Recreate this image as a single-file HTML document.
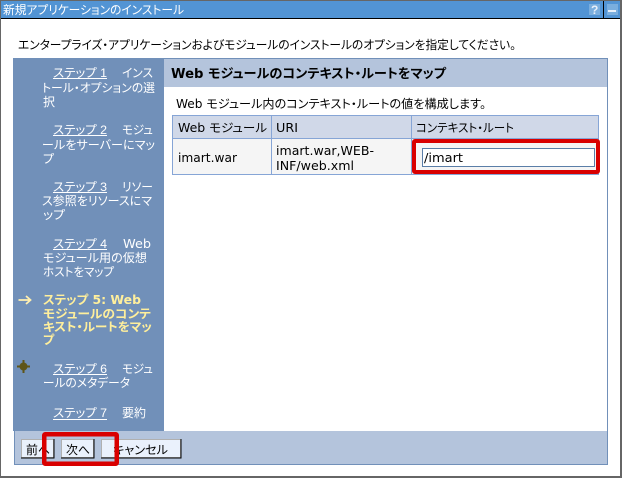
<!DOCTYPE html>
<html>
<head>
<meta charset="utf-8">
<style>
html,body{margin:0;padding:0;width:622px;height:479px;overflow:hidden;background:#fff}
svg{display:block}
text{font-family:"Liberation Sans","Noto Sans CJK JP",sans-serif;font-size:12px;font-feature-settings:"palt";white-space:pre}
.v{font-family:"DejaVu Sans","Noto Sans CJK JP",sans-serif}
.w{fill:#fff}
.y{fill:#ffef9c;font-weight:bold}
.k{fill:#000}
</style>
</head>
<body>
<svg width="622" height="479" viewBox="0 0 622 479" xmlns="http://www.w3.org/2000/svg">
<rect width="622" height="479" fill="#fff"/>
<!-- window frame -->
<rect x="0" y="0" width="622" height="1" fill="#666"/>
<rect x="0" y="0" width="1" height="478" fill="#666"/>
<rect x="620" y="0" width="2" height="478" fill="#666"/>
<rect x="0" y="476" width="622" height="2" fill="#666"/>
<rect x="1" y="1" width="619" height="17" fill="#5294d4"/>
<rect x="1" y="18" width="619" height="1" fill="#000"/>
<text x="3" y="14" class="w" textLength="181" lengthAdjust="spacingAndGlyphs">新規アプリケーションのインストール</text>
<rect x="589" y="4" width="11" height="11" fill="#7aaede"/>
<text x="591" y="14" style="font-weight:bold;font-size:12px" fill="#e8f0fa">?</text>
<rect x="603" y="1" width="1" height="17" fill="#000"/>
<rect x="607" y="4" width="11" height="11" fill="#7aaede"/>
<rect x="608" y="10" width="8" height="2" fill="#e8f0fa"/>

<text x="18" y="49" class="k" textLength="498" lengthAdjust="spacingAndGlyphs">エンタープライズ・アプリケーションおよびモジュールのインストールのオプションを指定してください。</text>

<!-- sidebar -->
<rect x="13" y="58" width="151" height="373" fill="#7190b9"/>
<!-- panel -->
<rect x="164" y="58" width="444" height="1" fill="#7190b9"/>
<rect x="607" y="58" width="1" height="407" fill="#7190b9"/>
<rect x="164" y="59" width="443" height="28" fill="#b4c4dc"/>
<text x="171" y="78" class="v k" style="font-weight:bold;font-size:13px" textLength="275" lengthAdjust="spacingAndGlyphs">Web モジュールのコンテキスト・ルートをマップ</text>
<text x="176" y="108" class="v k" textLength="310" lengthAdjust="spacingAndGlyphs">Web モジュール内のコンテキスト・ルートの値を構成します。</text>

<!-- table -->
<rect x="172" y="115" width="427" height="60" fill="#86a5d6"/>
<rect x="173" y="116" width="98" height="22" fill="#d0d8e8"/>
<rect x="272" y="116" width="139" height="22" fill="#d0d8e8"/>
<rect x="412" y="116" width="186" height="22" fill="#d0d8e8"/>
<rect x="173" y="139" width="98" height="35" fill="#f5f5f5"/>
<rect x="272" y="139" width="139" height="35" fill="#f5f5f5"/>
<rect x="412" y="139" width="186" height="35" fill="#f5f5f5"/>
<text x="178" y="132" class="v k" textLength="89" lengthAdjust="spacingAndGlyphs">Web モジュール</text>
<text x="276" y="132" class="v k" textLength="22" lengthAdjust="spacingAndGlyphs">URI</text>
<text x="416" y="132" class="k" textLength="98" lengthAdjust="spacingAndGlyphs">コンテキスト・ルート</text>
<text x="178" y="162" class="v k" textLength="59" lengthAdjust="spacingAndGlyphs">imart.war</text>
<text x="276" y="155" class="v k" textLength="98" lengthAdjust="spacingAndGlyphs">imart.war,WEB-</text>
<text x="276" y="170" class="v k" textLength="78" lengthAdjust="spacingAndGlyphs">INF/web.xml</text>
<rect x="422.500" y="148.500" width="172" height="18" fill="#fff" stroke="#5a7ea8"/>
<text x="424" y="162" class="v k" textLength="39" lengthAdjust="spacingAndGlyphs">/imart</text>
<rect x="414" y="141" width="184" height="31" rx="1" fill="none" stroke="#d90000" stroke-width="4"/>

<!-- sidebar text -->
<g class="w">
<text x="53" y="77" class="w" textLength="54" lengthAdjust="spacingAndGlyphs">ステップ 1</text><rect x="53" y="78" width="54" height="1" fill="#fff"/>
<text x="122" y="77" class="w" textLength="31" lengthAdjust="spacingAndGlyphs">インス</text>
<text x="42" y="92" class="w" textLength="113" lengthAdjust="spacingAndGlyphs">トール・オプションの選</text>
<text x="43" y="106" class="w">択</text>

<text x="53" y="134" class="w" textLength="54" lengthAdjust="spacingAndGlyphs">ステップ 2</text><rect x="53" y="135" width="54" height="1" fill="#fff"/>
<text x="122" y="134" class="w" textLength="31" lengthAdjust="spacingAndGlyphs">モジュ</text>
<text x="42" y="149" class="w" textLength="113" lengthAdjust="spacingAndGlyphs">ールをサーバーにマッ</text>
<text x="43" y="163" class="w">プ</text>

<text x="53" y="191" class="w" textLength="54" lengthAdjust="spacingAndGlyphs">ステップ 3</text><rect x="53" y="192" width="54" height="1" fill="#fff"/>
<text x="122" y="191" class="w" textLength="31" lengthAdjust="spacingAndGlyphs">リソー</text>
<text x="42" y="205" class="w" textLength="110" lengthAdjust="spacingAndGlyphs">ス参照をリソースにマ</text>
<text x="43" y="219" class="w" textLength="22" lengthAdjust="spacingAndGlyphs">ップ</text>

<text x="53" y="248" class="w" textLength="54" lengthAdjust="spacingAndGlyphs">ステップ 4</text><rect x="53" y="249" width="54" height="1" fill="#fff"/>
<text x="123" y="248" class="v w" textLength="28" lengthAdjust="spacingAndGlyphs">Web</text>
<text x="43" y="262" class="w" textLength="104" lengthAdjust="spacingAndGlyphs">モジュール用の仮想</text>
<text x="43" y="276" class="w" textLength="71" lengthAdjust="spacingAndGlyphs">ホストをマップ</text>

<text x="43" y="304" class="v y" textLength="98" lengthAdjust="spacingAndGlyphs">ステップ 5: Web</text>
<text x="43" y="318" class="y" textLength="108" lengthAdjust="spacingAndGlyphs">モジュールのコンテ</text>
<text x="43" y="331" class="y" textLength="109" lengthAdjust="spacingAndGlyphs">キスト・ルートをマッ</text>
<text x="43" y="344" class="y">プ</text>

<text x="53" y="373" class="w" textLength="54" lengthAdjust="spacingAndGlyphs">ステップ 6</text><rect x="53" y="374" width="54" height="1" fill="#fff"/>
<text x="122" y="373" class="w" textLength="31" lengthAdjust="spacingAndGlyphs">モジュ</text>
<text x="43" y="387" class="w" textLength="87" lengthAdjust="spacingAndGlyphs">ールのメタデータ</text>

<text x="53" y="417" class="w" textLength="54" lengthAdjust="spacingAndGlyphs">ステップ 7</text><rect x="53" y="419" width="54" height="1" fill="#fff"/>
<text x="122" y="417" class="w" textLength="24" lengthAdjust="spacingAndGlyphs">要約</text>
</g>

<!-- arrow icon -->
<path d="M18.500 300H30M26 296l4.500 4-4.500 4" fill="none" stroke="#ffefb0" stroke-width="1.800"/>
<!-- step marker icon -->
<g fill="#5e5518">
<circle cx="23.500" cy="366.500" r="4"/>
<rect x="17" y="365.500" width="13" height="2"/>
<rect x="22.500" y="360" width="2" height="13"/>
</g>

<!-- bottom bar -->
<rect x="14" y="431" width="594" height="34" fill="#7190b9"/>
<rect x="15" y="431" width="592" height="33" fill="#b4c4dc"/>
<g>
<rect x="21.500" y="439.500" width="32" height="18" fill="#eaf1fc" stroke="#b0b0b0"/>
<path d="M54 439V458H21" fill="none" stroke="#000"/>
<text x="26" y="454" class="k" textLength="24" lengthAdjust="spacingAndGlyphs">前へ</text>
<rect x="61.500" y="439.500" width="32" height="18" fill="#eaf1fc" stroke="#b0b0b0"/>
<path d="M94 439V458H61" fill="none" stroke="#000"/>
<text x="66" y="454" class="k" textLength="24" lengthAdjust="spacingAndGlyphs">次へ</text>
<rect x="101.500" y="439.500" width="79" height="18" fill="#eaf1fc" stroke="#b0b0b0"/>
<path d="M181 439V458H101" fill="none" stroke="#000"/>
<text x="113" y="454" class="k" textLength="55" lengthAdjust="spacingAndGlyphs">キャンセル</text>
</g>
<rect x="44.250" y="434.250" width="72.500" height="29.500" rx="1" fill="none" stroke="#d90000" stroke-width="4.500"/>
</svg>
</body>
</html>
